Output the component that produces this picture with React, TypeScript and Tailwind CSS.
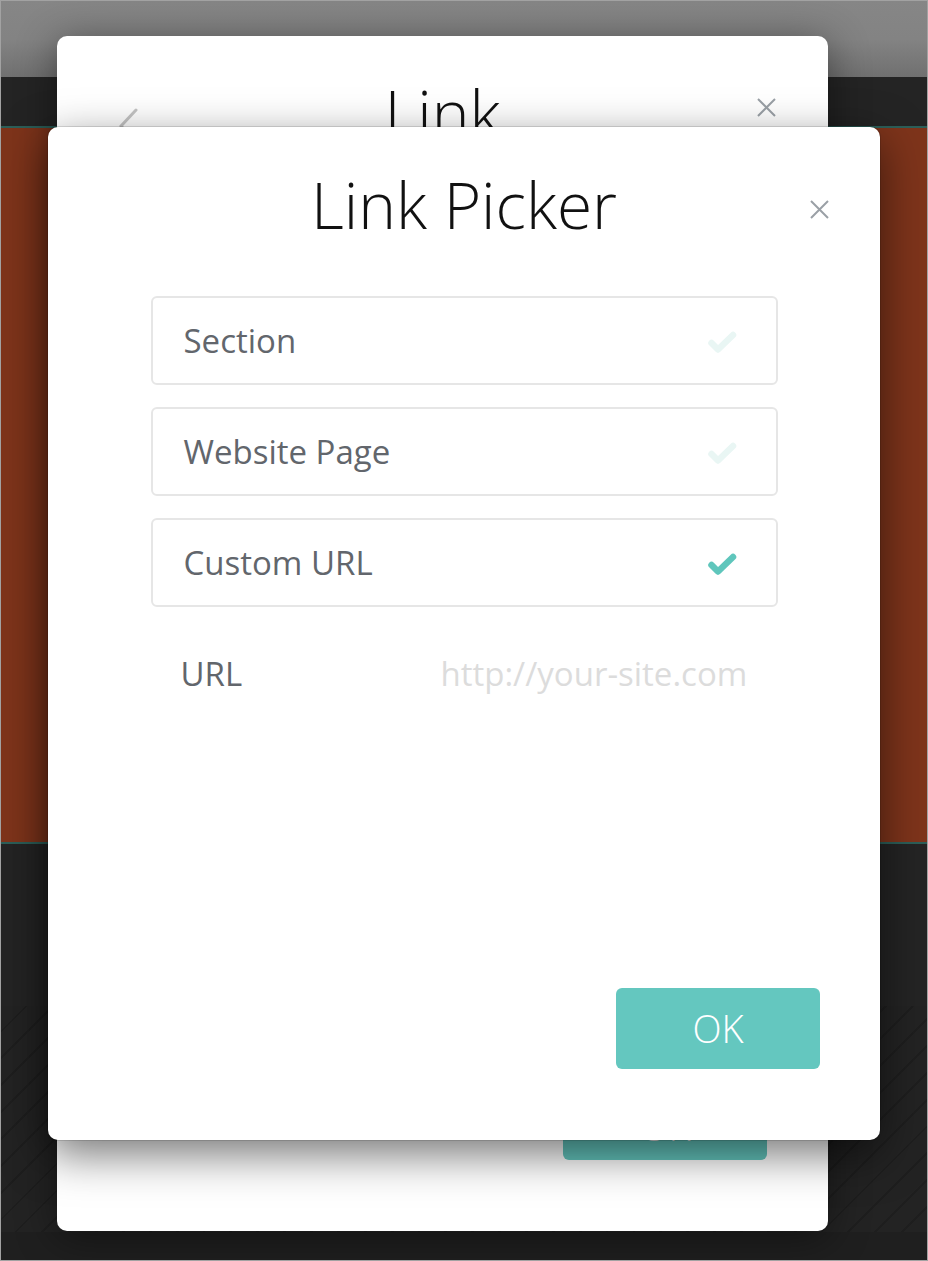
import React from "react"

/** Ícone de fechar (X fino). */
function CloseIcon({ className = "" }: { className?: string }) {
  return (
    <svg viewBox="0 0 19 19" width="19" height="19" className={className}>
      <path d="M1 1 L18 18 M18 1 L1 18" stroke="#9aa0a6" strokeWidth="2" fill="none" />
    </svg>
  )
}

/** Ícone de confirmação (check). */
function CheckIcon({ active }: { active: boolean }) {
  return (
    <svg viewBox="0 0 30 28" width="30" height="28">
      <polyline
        points="4.5,16 11,22.5 26,8"
        fill="none"
        stroke={active ? "#5fc6bc" : "#e9f6f4"}
        strokeWidth="6.5"
        strokeLinecap="round"
        strokeLinejoin="round"
      />
    </svg>
  )
}

interface OptionProps {
  label: string
  active?: boolean
}

/** Opção do seletor de link. */
function Option({ label, active = false }: OptionProps) {
  return (
    <div className="h-[89px] flex items-center justify-between rounded-[6px] border-2 border-[#e6e6e6] pl-[31px] pr-[39px]">
      <span className="text-[33px] leading-[40px] text-[#62666c]">{label}</span>
      <CheckIcon active={active} />
    </div>
  )
}

/** Janela de fundo ("Link"). */
function BackModal() {
  return (
    <div className="absolute left-[56px] top-[35px] w-[771px] h-[1195px] rounded-[10px] bg-white shadow-[0_6px_40px_rgba(0,0,0,0.45)] flex flex-col">
      {/* Voltar */}
      <svg viewBox="0 0 20 40" width="20" height="40" className="absolute left-[62px] top-[72px]">
        <polyline points="17,2 2,18 17,34" fill="none" stroke="#c4c4c4" strokeWidth="3" strokeLinecap="round" />
      </svg>
      <CloseIcon className="absolute right-[52px] top-[62px]" />

      <h2 className="pt-[45px] text-center text-[64px] leading-[64px] font-light text-[#111]">Link</h2>

      <button className="mt-auto self-end mr-[61px] mb-[71px] w-[204px] h-[81px] rounded-[6px] bg-[#64c7bf] pt-[14px] text-[38px] font-light text-white">
        OK
      </button>
    </div>
  )
}

/** Janela da frente ("Link Picker"). */
function LinkPicker() {
  return (
    <div className="absolute left-[47px] top-[126px] w-[832px] h-[1013px] rounded-[10px] bg-white shadow-[0_0_0_1px_rgba(0,0,0,0.12),0_14px_45px_rgba(0,0,0,0.55)] flex flex-col">
      <CloseIcon className="absolute right-[51px] top-[73px]" />

      <h1 className="pt-[46px] text-center text-[64px] leading-[64px] font-light text-[#111]">Link Picker</h1>

      {/* Opções */}
      <div className="mt-[59px] w-[627px] mx-auto flex flex-col gap-[22px]">
        <Option label="Section" />
        <Option label="Website Page" />
        <Option label="Custom URL" active />
      </div>

      {/* Campo de URL */}
      <div className="mt-[45px] w-[627px] mx-auto h-[44px] flex items-center">
        <label className="w-[290px] shrink-0 pl-[30px] text-[33px] leading-[44px] text-[#62666c]">URL</label>
        <input
          placeholder="http://your-site.com"
          className="flex-1 min-w-0 bg-transparent outline-none text-[33px] leading-[44px] text-[#62666c] placeholder:text-[#dcdcdc]"
        />
      </div>

      <button className="mt-auto self-end mr-[60px] mb-[71px] w-[204px] h-[81px] rounded-[6px] bg-[#64c7bf] text-[38px] font-light text-white">
        OK
      </button>
    </div>
  )
}

export default function App() {
  return (
    <div className="relative w-[928px] h-[1261px] overflow-hidden border border-[#a2a2a2] bg-[#1f1f1f] flex flex-col font-['Open_Sans',sans-serif]">
      {/* Página por trás */}
      <div className="h-[76px] bg-gradient-to-b from-[#868686] via-[#838383] to-[#707070]" />
      <div className="h-[49px] bg-[#242424]" />
      <div className="h-[2px] bg-[#2c5f59]" />
      <div className="h-[714px] bg-[#7e341b]" />
      <div className="h-[2px] bg-[#2c5f59]" />
      <div className="h-[162px] bg-[#242424]" />
      <div className="h-[226px] bg-[#232323] bg-[image:repeating-linear-gradient(135deg,transparent_0px,transparent_17px,rgba(0,0,0,0.14)_17px,rgba(0,0,0,0.14)_19px)]" />
      <div className="flex-1 bg-[#1f1f1f]" />

      <BackModal />
      <LinkPicker />
    </div>
  )
}
